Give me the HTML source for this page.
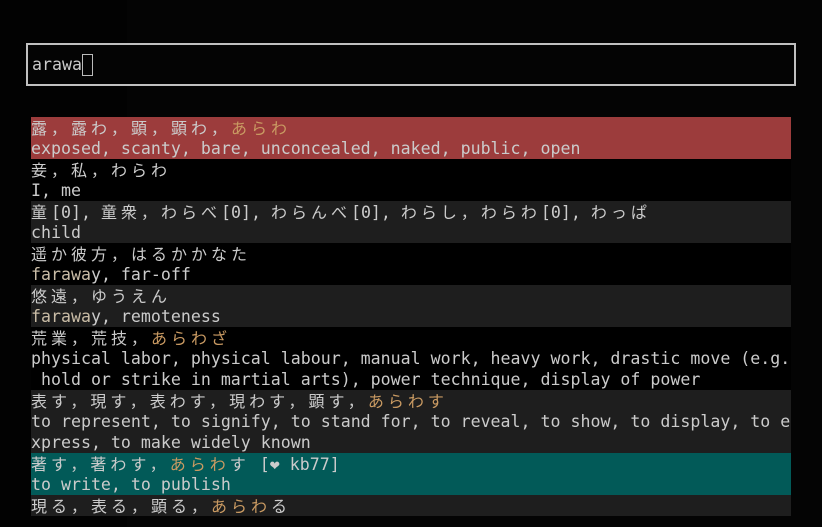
<!DOCTYPE html>
<html><head><meta charset="utf-8"><style>
html,body{margin:0;padding:0;background:#040404;width:822px;height:527px;overflow:hidden}
body{font-family:"DejaVu Sans Mono","Liberation Mono","Noto Sans CJK JP",monospace;font-size:16.6px;color:#cbcbcb}
.sh{position:absolute;left:0;top:0;width:127px;height:527px;background:#020202}
.inp{position:absolute;left:26px;top:43px;width:766px;height:39px;border:2px solid #c0c0c0;background:#040404}
.inp span{position:absolute;left:4px;top:9px;line-height:21px}
.cur{display:inline-block;width:11px;height:22px;border:1px solid #bbb;vertical-align:top;margin-left:0;box-sizing:border-box}
.list{position:absolute;left:31px;top:117px;width:760px}
.r{line-height:21px;height:21px;white-space:pre;overflow:hidden}
.j{font-family:"Noto Sans CJK JP",sans-serif;letter-spacing:4px;font-size:16px}
.o{color:#c99a62}
.w{color:#c9bca6}
.red{background:#9c3c3c}
.g{background:#1e1e1e}
.t{background:#025a58}
.k{background:#000}
</style></head><body>
<div class="sh"></div>
<div class="inp"><span>arawa<i class="cur"></i></span></div>
<div class="list">
<div class="red"><div class="r"><span class="j">露，露わ，顕，顕わ，<span class="o">あらわ</span></span></div><div class="r">exposed, scanty, bare, unconcealed, naked, public, open</div></div>
<div class="k"><div class="r"><span class="j">妾，私，わらわ</span></div><div class="r">I, me</div></div>
<div class="g"><div class="r"><span class="j">童</span>[0], <span class="j">童衆，わらべ</span>[0], <span class="j">わらんべ</span>[0], <span class="j">わらし，わらわ</span>[0], <span class="j">わっぱ</span></div><div class="r">child</div></div>
<div class="k"><div class="r"><span class="j">遥か彼方，はるかかなた</span></div><div class="r"><span class="w">farawa</span>y, far-off</div></div>
<div class="g"><div class="r"><span class="j">悠遠，ゆうえん</span></div><div class="r"><span class="w">farawa</span>y, remoteness</div></div>
<div class="k"><div class="r"><span class="j">荒業，荒技，<span class="o">あらわざ</span></span></div><div class="r">physical labor, physical labour, manual work, heavy work, drastic move (e.g.</div><div class="r"> hold or strike in martial arts), power technique, display of power</div></div>
<div class="g"><div class="r"><span class="j">表す，現す，表わす，現わす，顕す，<span class="o">あらわす</span></span></div><div class="r">to represent, to signify, to stand for, to reveal, to show, to display, to e</div><div class="r">xpress, to make widely known</div></div>
<div class="t"><div class="r"><span class="j">著す，著わす，<span class="o">あらわ</span>す</span> [❤ kb77]</div><div class="r">to write, to publish</div></div>
<div class="g"><div class="r"><span class="j">現る，表る，顕る，<span class="o">あらわ</span>る</span></div></div>
</div>
</body></html>
